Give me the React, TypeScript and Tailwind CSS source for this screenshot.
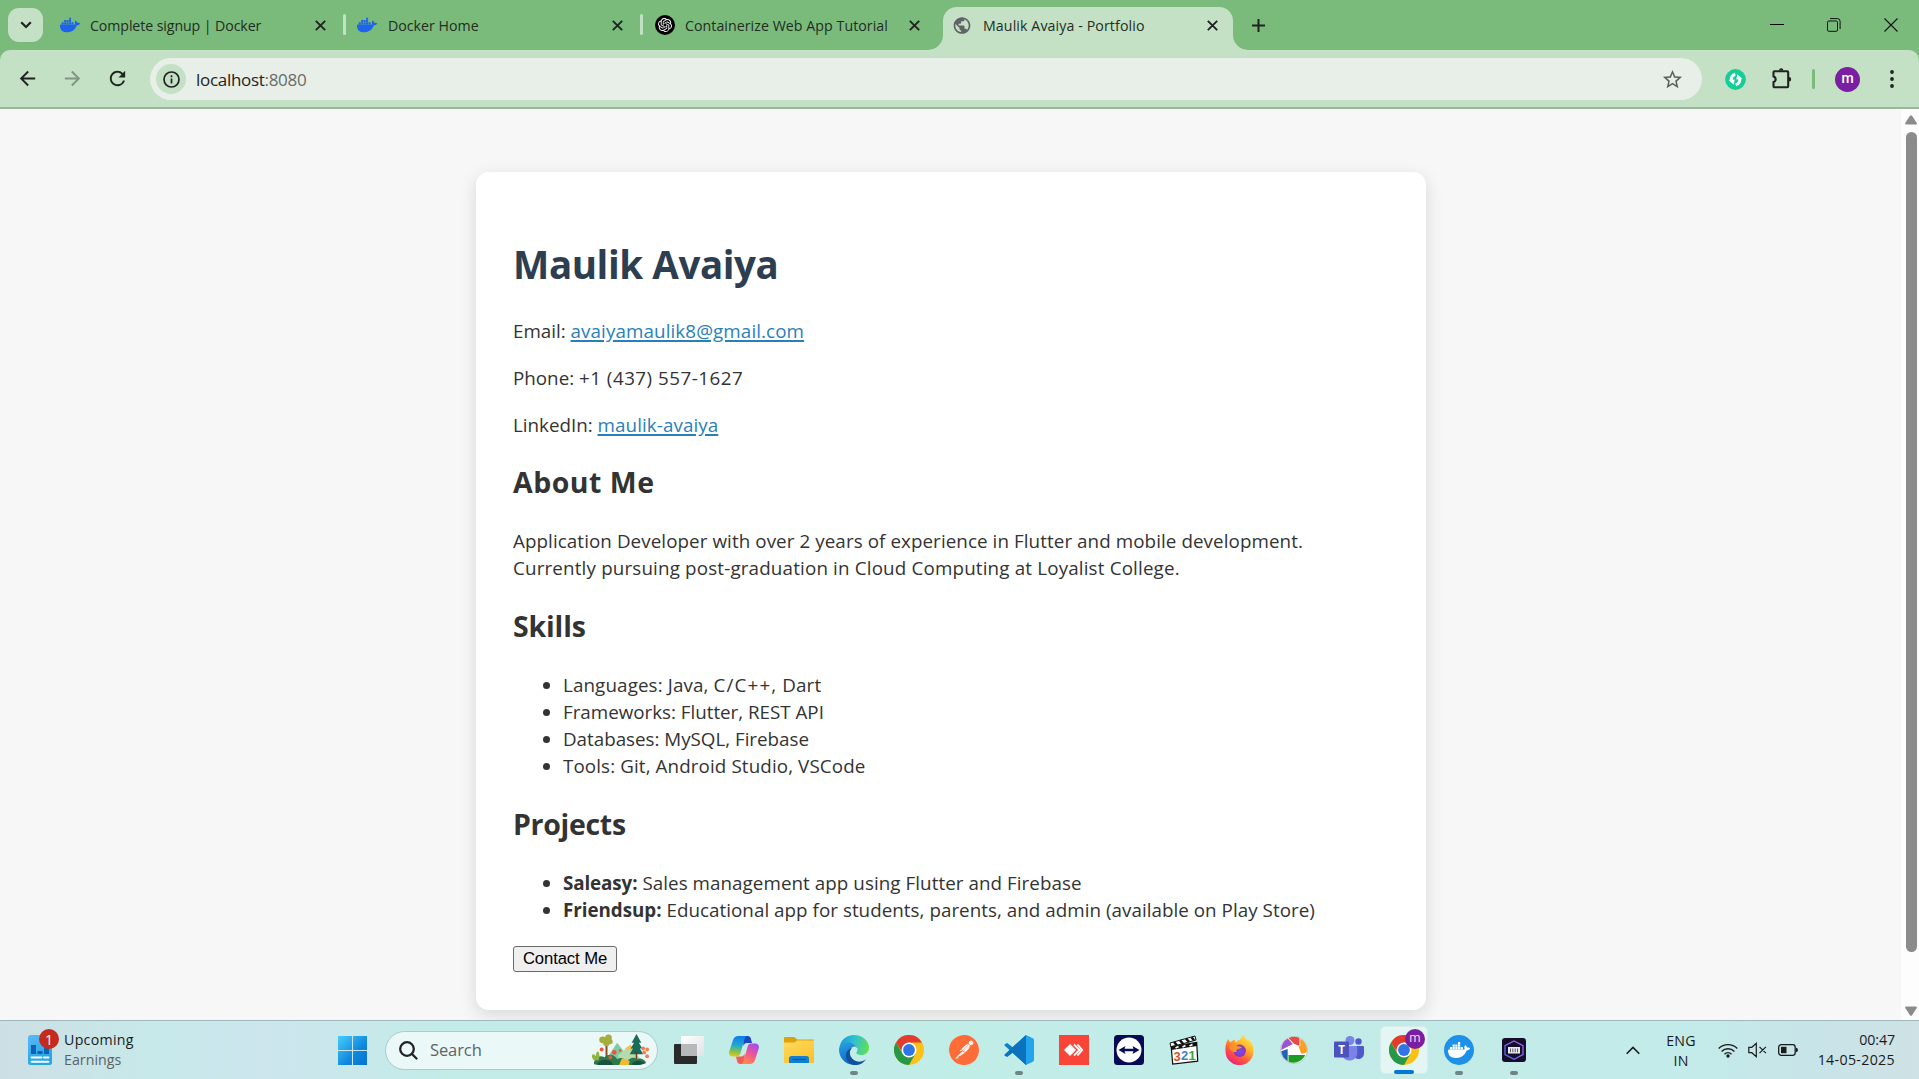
import React from "react";
import { SiDocker, SiOpenai, SiPostman } from "react-icons/si";
import { MdPublic, MdStarBorder, MdRefresh, MdArrowBack, MdArrowForward } from "react-icons/md";

function Cross({ size = 11 }: { size?: number }) {
  return (
    <svg width={size} height={size} viewBox="0 0 11 11" stroke="#1f2420" strokeWidth="1.9">
      <path d="M.8.8l9.4 9.4M10.2.8.8 10.2" />
    </svg>
  );
}

function Tab({ icon, title, tracking, className }: { icon: React.ReactNode; title: string; tracking: string; className: string }) {
  return (
    <div className={`flex h-[50px] items-center ${className}`}>
      <span className="flex w-5 shrink-0 items-center justify-center">{icon}</span>
      <span className={`ml-2.5 flex-1 whitespace-nowrap pt-0.5 text-[14.2px] text-[#1f2d22] ${tracking}`}>{title}</span>
      <Cross />
    </div>
  );
}

function TabStrip() {
  return (
    <div className="flex h-[50px] bg-[#7abb7c]">
      <div className="ml-2 mt-2 flex h-[34px] w-[35px] shrink-0 items-center justify-center rounded-[11px] bg-[#c5e1c5]">
        <svg width="12" height="8" viewBox="0 0 12 8" fill="none" stroke="#1f2420" strokeWidth="2.2">
          <path d="M1.2 1.2 6 6l4.800-4.800" />
        </svg>
      </div>
      <Tab className="ml-[17px] w-[266px]" tracking="tracking-[-0.1px]" title="Complete signup | Docker" icon={<SiDocker size={20} color="#1d63ed" />} />
      <span className="ml-[17px] mt-3.5 h-[21px] w-[3px] rounded-full bg-[#c5e1c5]" />
      <Tab className="ml-[11px] w-[266px]" tracking="pl-px tracking-[0px]" title="Docker Home" icon={<SiDocker size={20} color="#1d63ed" />} />
      <span className="ml-[17px] mt-3.5 h-[21px] w-[3px] rounded-full bg-[#c5e1c5]" />
      <Tab
        className="ml-3 w-[265px]"
        tracking="tracking-[0.05px]"
        title="Containerize Web App Tutorial"
        icon={
          <span className="flex size-5 items-center justify-center rounded-full bg-black">
            <SiOpenai size={14} color="#fff" />
          </span>
        }
      />
      <div className="ml-2 flex items-end">
        <svg width="15" height="15" viewBox="0 0 15 15" fill="#c5e1c5"><path d="M15 0v15H0A15 15 0 0 0 15 0z" /></svg>
        <div className="flex h-[43px] w-[290px] items-start rounded-t-[14px] bg-[#c5e1c5] pl-[9px]">
          <Tab className="-mt-[7px] w-[266px]" tracking="pl-px tracking-[0.1px]" title="Maulik Avaiya - Portfolio" icon={<MdPublic size={21} color="#5f6368" />} />
        </div>
        <svg width="15" height="15" viewBox="0 0 15 15" fill="#c5e1c5"><path d="M0 0v15h15A15 15 0 0 1 0 0z" /></svg>
      </div>
      <svg className="ml-[4px] mt-[19px]" width="13" height="13" viewBox="0 0 13 13" stroke="#1f2420" strokeWidth="2"><path d="M6.500 0v13M0 6.500h13" /></svg>
      <div className="ml-auto mr-[21px] flex h-[49px] items-center gap-[43.500px]">
        <svg className="-mr-px" width="14" height="14" viewBox="0 0 14 14" stroke="#000" shapeRendering="crispEdges"><path d="M0 6.500h14" /></svg>
        <svg width="14" height="14" viewBox="0 0 14 14" fill="none" stroke="#111"><rect x=".5" y="3" width="10" height="10.300" rx="1.200" /><path d="M3 .6h7.500a2.600 2.600 0 0 1 2.600 2.600v7.800" /></svg>
        <svg width="14" height="14" viewBox="0 0 14 14" stroke="#111" strokeWidth="1.1"><path d="M.5.5l13 13M13.500.5l-13 13" /></svg>
      </div>
    </div>
  );
}

function Toolbar() {
  return (
    <div className="bg-[#7abb7c]">
      <div className="flex h-[59px] items-start rounded-t-[10px] border-b-2 border-[#9cb59d] bg-[#c5e1c5] pt-2">
        <div className="ml-4 flex h-[42px] items-center gap-[22px] pb-px text-[#1f2420]">
          <MdArrowBack size={23} />
          <MdArrowForward size={23} className="opacity-40" />
          <MdRefresh size={23} />
        </div>
        <div className="ml-[21px] flex h-[42px] w-[1552px] items-center rounded-full bg-[#e8efe8] pl-1.5 pr-[18px]">
          <span className="flex size-[30px] items-center justify-center rounded-full bg-[#c5e1c5]">
            <svg width="17" height="17" viewBox="0 0 17 17" fill="none" stroke="#1f2420" strokeWidth="1.700"><circle cx="8.500" cy="8.500" r="7.500" /><path d="M8.500 7.500v5M8.500 4.300v1.900" /></svg>
          </span>
          <span className="ml-2.5 flex-1 pt-px text-[17px] tracking-[-0.3px] text-[#1f2420]">
            localhost<span className="text-[#666d67]">:8080</span>
          </span>
          <MdStarBorder size={23} color="#5a615b" />
        </div>
        <div className="flex h-[42px] items-center">
          <svg className="ml-[23px]" width="21" height="21" viewBox="0 0 21 21">
            <circle cx="10.500" cy="10.500" r="10.400" fill="#13cf97" />
            <path d="M10.300 5.200A5.300 5.300 0 0 0 6.400 12" fill="none" stroke="#fff" strokeWidth="3" />
            <path d="M10.700 15.800A5.300 5.300 0 0 0 14.600 9" fill="none" stroke="#fff" strokeWidth="3" />
            <path d="m3.700 11.300 6-.8-1 5.300zM17.300 9.700l-6 .8 1-5.300z" fill="#fff" />
          </svg>
          <svg className="ml-[25px]" width="22" height="22" viewBox="0 0 22 22" fill="none" stroke="#1f2420" strokeWidth="2.100" strokeLinejoin="round">
            <path d="M3.500 3.300h12.700q1 0 1 1V18.200q0 1-1 1H3.500q-1 0-1-1v-4.100a2.900 2.900 0 0 0 0-5.600V4.300q0-1 1-1z" />
            <path d="M8 2.500a2.200 2.200 0 0 1 4.400 0zM18 9a2.200 2.200 0 0 1 0 4.400z" fill="#1f2420" stroke="none" />
          </svg>
          <span className="ml-[19px] h-5 w-[3px] rounded-full bg-[#7abb7c]" />
          <span className="ml-5 flex size-[25px] items-center justify-center rounded-full bg-[#7b1fa2] pb-0.5 font-['Roboto'] text-[14px] font-medium text-white">m</span>
          <svg className="ml-[30px]" width="4" height="20" viewBox="0 0 4 20" fill="#1f2420"><circle cx="2" cy="3" r="1.900" /><circle cx="2" cy="10" r="1.900" /><circle cx="2" cy="17" r="1.900" /></svg>
        </div>
      </div>
    </div>
  );
}

const skills: [React.ReactNode, string][] = [
  [<>Languages: Java, <span className="tracking-[1.15px]">C/C++,</span> Dart</>, "tracking-[0.12px]"],
  ["Frameworks: Flutter, REST API", "tracking-[-0.01px]"],
  ["Databases: MySQL, Firebase", "tracking-[-0.01px]"],
  ["Tools: Git, Android Studio, VSCode", "tracking-[0.11px]"],
];

function Portfolio() {
  return (
    <div className="flex min-h-0 flex-1 bg-[#f7f7f7]">
      <div className="min-w-0 flex-1 overflow-hidden pt-[63px]">
        <main className="mx-auto h-[838px] w-[950px] rounded-[12.500px] bg-white px-[37.500px] pt-[64px] text-[18.800px] leading-[27px] text-[#333] shadow-[0_5px_18px_rgba(0,0,0,0.13)]">
          <h1 className="h-[53px] text-[38.500px] font-bold leading-[56px] tracking-[-0.42px] text-[#2c3e50]">Maulik Avaiya</h1>
          <div className="mt-[29px] flex flex-col gap-5">
            <p>Email: <a className="tracking-[0.1px] text-[#2980b9] underline decoration-2 underline-offset-2">avaiyamaulik8@gmail.com</a></p>
            <p>Phone: <span className="tracking-[0.5px]">+1 (437) 557-1627</span></p>
            <p>LinkedIn: <a className="tracking-[0.09px] text-[#2980b9] underline decoration-2 underline-offset-2">maulik-avaiya</a></p>
          </div>
          <h2 className="mt-[23px] text-[28.500px] font-bold leading-10 tracking-[0.5px]">About Me</h2>
          <p className="mt-[26px] whitespace-nowrap">
            <span className="block tracking-[0.083px]">Application Developer with over 2 years of experience in Flutter and mobile development.</span>
            <span className="block tracking-[0.165px]">Currently pursuing post-graduation in Cloud Computing at Loyalist College.</span>
          </p>
          <h2 className="mt-6 text-[28.500px] font-bold leading-10 tracking-[-0.15px]">Skills</h2>
          <ul className="mt-[26px] list-disc pl-[50px]">
            {skills.map(([s, t], i) => <li key={i}><span className={t}>{s}</span></li>)}
          </ul>
          <h2 className="mt-6 text-[28.500px] font-bold leading-10 tracking-[-0.3px]">Projects</h2>
          <ul className="mt-[26px] list-disc whitespace-nowrap pl-[50px]">
            <li className="tracking-[0.06px]"><b className="tracking-[-0.1px]">Saleasy:</b> Sales management app using Flutter and Firebase</li>
            <li className="tracking-[0.04px]"><b className="tracking-[-0.03px]">Friendsup:</b> Educational app for students, parents, and admin (available on Play Store)</li>
          </ul>
          <button className="mt-[22px] block h-[26px] w-[104px] rounded-[3px] border border-[#6b6b6b] bg-[#efefef] font-['Liberation_Sans'] text-[16.670px] leading-[22px] tracking-[-0.1px] text-black">Contact Me</button>
        </main>
      </div>
      <div className="flex w-[18px] shrink-0 flex-col items-center bg-[#fdfdfd] pb-1 pt-1.5">
        <svg className="ml-0.5" width="12" height="10" viewBox="0 0 12 10" fill="#8b8b8b"><path d="M5 .8q1-1.200 2 0l4.600 7q.8 1.700-.8 1.700H1.200Q-.4 9.500.4 7.800z" /></svg>
        <div className="ml-0.5 mt-[7px] h-[820px] w-[11px] rounded-full bg-[#8b8b8b]" />
        <svg className="ml-0.5 mt-auto" width="12" height="10" viewBox="0 0 12 10" fill="#8b8b8b"><path d="M5 9.200q1 1.200 2 0l4.600-7Q12.400.5 10.800.5H1.200Q-.4.500.4 2.200z" /></svg>
      </div>
    </div>
  );
}

function Chrome() {
  return (
    <svg width="30" height="30" viewBox="0 0 30 30">
      <circle cx="15" cy="15" r="15" fill="#fbc116" />
      <path d="M2 7.500A15 15 0 0 1 28 7.500H15L9 18.500z" fill="#e33b2e" />
      <path d="M2 7.500A15 15 0 0 0 15 30l6.500-11.250L8.500 18.750z" fill="#279847" />
      <circle cx="15" cy="15" r="7.500" fill="#fff" />
      <circle cx="15" cy="15" r="5.900" fill="#2f75e8" />
    </svg>
  );
}

function TaskView() {
  return (
    <svg width="30" height="28" viewBox="0 0 30 28">
      <defs><linearGradient id="tv" x2="1" y2="1"><stop stopColor="#fff" /><stop offset="1" stopColor="#dfe3e4" /></linearGradient></defs>
      <rect y="8" width="23" height="20" rx="1" fill="#2a2a2a" />
      <rect x="7" width="23" height="20" rx="1" fill="url(#tv)" />
      <path d="M7 8h16v12H7z" fill="#b5b9ba" />
    </svg>
  );
}

function Copilot() {
  return (
    <svg width="30" height="28" viewBox="0 0 30 28">
      <defs>
        <linearGradient id="cpa" x1=".4" y1="0" x2=".3" y2="1"><stop stopColor="#0c7ee8" /><stop offset=".45" stopColor="#22a8d4" /><stop offset=".75" stopColor="#7dc34a" /><stop offset="1" stopColor="#f2c21b" /></linearGradient>
        <linearGradient id="cpb" x1=".8" y1="0" x2=".3" y2="1"><stop stopColor="#a24cf0" /><stop offset=".5" stopColor="#ee5599" /><stop offset="1" stopColor="#ff8a45" /></linearGradient>
      </defs>
      <path d="M14 0h4.500c2 0 2.900 1 3.400 2.800L23 7h-5c-2 0-3 1-3.600 3z" fill="#1c45c8" />
      <path d="M16 28h-4.500c-2 0-2.900-1-3.400-2.800L7 20.500h5c2 0 3-1 3.600-3z" fill="#f45b57" />
      <path d="M9.500 0H18c-1.300.3-2 1.300-2.500 3l-4 14c-.7 2.400-1.700 3.500-4 3.500H4C.5 20.500-.5 18 .4 15L4 4C5 1.200 6.600 0 9.500 0z" fill="url(#cpa)" />
      <path d="M20.500 28H12c1.300-.3 2-1.300 2.500-3l4-14c.7-2.400 1.700-3.500 4-3.500H26c3.500 0 4.500 2.500 3.600 5.500L26 24c-1 2.800-2.600 4-5.500 4z" fill="url(#cpb)" />
    </svg>
  );
}

function Folder() {
  return (
    <svg width="30" height="26" viewBox="0 0 30 26">
      <defs><linearGradient id="fo" x2=".6" y2="1"><stop stopColor="#ffdb62" /><stop offset="1" stopColor="#fcc22c" /></linearGradient></defs>
      <path d="M1 0h9.500L13 2.500h16q1 0 1 1V8H0V1q0-1 1-1z" fill="#e0a009" />
      <path d="M0 5.500h10.500L13 3.500h17V25q0 1-1 1H1q-1 0-1-1z" fill="url(#fo)" />
      <path d="M5 26v-4.500q0-2.500 2.500-2.500h15q2.500 0 2.500 2.500V26z" fill="#1180d3" />
      <path d="M8.500 22.500h13" stroke="#0a559c" strokeWidth="1.200" />
    </svg>
  );
}

function Edge() {
  return (
    <svg width="30" height="30" viewBox="0 0 30 30">
      <defs>
        <linearGradient id="ea" x1="0" y1=".3" x2="1" y2=".5"><stop stopColor="#1f97db" /><stop offset=".5" stopColor="#2fc3cf" /><stop offset="1" stopColor="#62de55" /></linearGradient>
        <linearGradient id="eb" x1="0" y1="0" x2=".3" y2="1"><stop stopColor="#2aa0e4" /><stop offset="1" stopColor="#0f6cc4" /></linearGradient>
      </defs>
      <path d="M.3 13C1.500 5 7.500 0 15 0c8.500 0 15 6 15 12.500 0 5-3.800 7.500-7.700 7.500-3.300 0-5-1.200-5-2.200 0-.8 1.200-1.300 1.200-3.300 0-3.500-3.200-6.200-7.500-6.200C6 8.300 2 10 .3 13z" fill="url(#ea)" />
      <path d="M0 15c0-4.500 4-7.500 9-7.500 4.600 0 8.500 2.500 9.300 5.500-1-1.300-2.300-1.800-3.500-1.500-3 1-4.500 4-4.300 7 .2 4.500 3.500 9.500 8 11A15 15 0 0 1 0 15z" fill="url(#eb)" />
      <path d="M13 13c-2.300 2-2.700 5-1.400 8.300 2 4.500 7 6.200 11.400 5 2-.5 3.300-1.500 4.500-2.800-3.500 6-9.500 7.500-14 6C8 27.500 6.500 23 7 19.500c.5-3.300 3-6 6-6.500z" fill="#114f9f" />
    </svg>
  );
}

function VSCode() {
  return (
    <svg width="30" height="30" viewBox="0 0 30 30">
      <path d="M22 0 8.700 12.200 3.200 8 .8 9.200Q0 10 .8 10.800L22 30V22z" fill="#0b82cf" />
      <path d="M22 30 8.700 17.800 3.200 22l-2.400-1.200Q0 20 .8 19.200L22 0v8z" fill="#0b72bd" />
      <path d="m22 0 6.800 3.200Q30 4 30 5v20q0 1-1.200 1.800L22 30z" fill="#25a4ee" />
    </svg>
  );
}

function AnyDesk() {
  return (
    <svg width="30" height="30" viewBox="0 0 30 30">
      <path d="M0 0h30v30H0z" fill="#fb4438" />
      <path d="m5 15 6-6 6 6-6 6z" fill="#fff" />
      <path d="M15 9.500 20.500 15 15 20.500M18.500 9.500 23.200 15l-4.700 5.500" fill="none" stroke="#fff" strokeWidth="1.900" />
    </svg>
  );
}

function TeamViewer() {
  return (
    <svg width="30" height="30" viewBox="0 0 30 30">
      <rect width="30" height="30" rx="3.500" fill="#050a52" />
      <circle cx="15" cy="15" r="12.500" fill="#fff" />
      <path d="m4.500 15 7-4-1 2.800h9l-1-2.800 7 4-7 4 1-2.800h-9l1 2.800z" fill="#050a52" />
    </svg>
  );
}

function MediaPlayer() {
  return (
    <svg width="30" height="30" viewBox="0 0 30 30">
      <path d="M1 8 26 1l1 4L2 12z" fill="#fff" stroke="#111" />
      <path d="m5 7 3 3.400M11 5.200l3 3.500M17 3.600l3 3.300M22.500 2.200l2.500 3" stroke="#111" strokeWidth="2.500" />
      <path d="m2.200 11.500 25.500-4 1 18.700-25 2.800z" fill="#fff" stroke="#111" strokeWidth="1.200" />
      <path d="m2 11.500 26-4v3.500L2.300 15z" fill="#111" />
      <path d="m6.500 13 3-1.500M13.500 12l3-1.500M20.500 11l3-1.500" stroke="#fff" strokeWidth="1.800" />
      <g fontFamily="Liberation Sans" fontSize="13" fontWeight="700">
        <text x="4.500" y="26" fill="#d8541f">3</text><text x="12" y="25.300" fill="#3f7fd3">2</text><text x="19.500" y="24.600" fill="#3da43a">1</text>
      </g>
    </svg>
  );
}

function Firefox() {
  return (
    <svg width="29" height="30" viewBox="0 0 29 30">
      <defs>
        <linearGradient id="ff" x1=".85" y1="0" x2=".2" y2="1"><stop stopColor="#fff04a" /><stop offset=".35" stopColor="#ffb42a" /><stop offset=".65" stopColor="#ff5a38" /><stop offset="1" stopColor="#e8178a" /></linearGradient>
        <radialGradient id="fg"><stop stopColor="#6f4ff2" /><stop offset="1" stopColor="#8f35b8" /></radialGradient>
      </defs>
      <path d="M3.500 4c.3 1.500 1 2.700 2 3.300C7 5.800 8.500 5 10.500 4.700 10 5.800 10 6.700 10.300 7.500L15.500 4c1-2 2-3.300 3.500-4 .2 2.500 2 4 3.800 5.500L23 4.300c4 3 5.800 7.200 5.500 12A14 14 0 0 1 .5 16C.2 11 1 7 3.500 4z" fill="url(#ff)" />
      <circle cx="14.700" cy="15.800" r="6.200" fill="url(#fg)" />
      <path d="M4 10.500c3-1.700 6-1.500 8.300.3 1 .8 2.500 1 4.700 1-.8 1.500-2.300 2-4 2.300-1.200.2-2 1.400-1.500 2.800-4 1-7-2-7.500-6.400z" fill="#ff9327" />
    </svg>
  );
}

function Picasa() {
  return (
    <svg width="28" height="28" viewBox="0 0 28 28">
      <circle cx="14" cy="14" r="13.600" fill="#fff" stroke="#b4bfc0" strokeWidth=".8" />
      <path d="M8.500 2.200A13 13 0 0 1 19.500 2L19.500 10 14 7.800z" fill="#e64c43" />
      <path d="M20.300 2.500A13 13 0 0 1 26.700 16.500L21.500 18l-3-7.500 1.800-.5z" fill="#f7a024" />
      <path d="M8.500 19H25.300A13 13 0 0 1 8.500 25.700z" fill="#1a9d22" />
      <path d="M1.200 15.200 7.700 13v12.200A13 13 0 0 1 1.200 15.200z" fill="#2161b6" />
      <path d="M7.800 2.600 12.800 8 1.200 14A13 13 0 0 1 7.800 2.600z" fill="#9b52cf" />
    </svg>
  );
}

function Teams() {
  return (
    <svg width="30" height="28" viewBox="0 0 30 28">
      <circle cx="24.500" cy="5.500" r="3.200" fill="#5059c9" />
      <path d="M19 10h10q1 0 1 1v6.500a5.500 5.500 0 0 1-9 4.200z" fill="#5059c9" />
      <circle cx="16" cy="4.500" r="4.500" fill="#7b83eb" />
      <path d="M8 10h14q1.200 0 1.200 1.200V18a7.800 7.800 0 0 1-15.400 0z" fill="#7b83eb" />
      <rect y="5.500" width="15" height="16" rx="1.300" fill="#4b53bc" />
      <text x="7.500" y="17.700" textAnchor="middle" fontFamily="Open Sans" fontSize="11.500" fontWeight="700" fill="#fff">T</text>
    </svg>
  );
}

function DockerDesktop() {
  return (
    <svg width="24" height="24" viewBox="0 0 24 24">
      <defs><linearGradient id="dd" x1="0" y1="1" x2="1" y2="0"><stop stopColor="#4772ec" /><stop offset="1" stopColor="#b060ee" /></linearGradient></defs>
      <rect width="24" height="24" rx="3" fill="#150d29" />
      <path d="m12 3 9 4.700v8.900L12 21.300l-9-4.700V7.700z" fill="none" stroke="url(#dd)" strokeWidth="1.300" />
      <rect x="6" y="9" width="12" height="6.500" fill="#e8eaf2" />
      <path d="M8.500 10.500v3.700M10.800 10.500v3.700M13.200 10.500v3.700M15.500 10.500v3.700" stroke="#4b4a66" strokeWidth=".9" />
    </svg>
  );
}

function SearchArt() {
  return (
    <svg width="58" height="32" viewBox="0 0 60 33">
      <path d="M15 27V9" stroke="#8a4b23" strokeWidth="2" />
      <g fill="#a5ad3c"><circle cx="11" cy="6" r="3.500" /><circle cx="17" cy="4" r="3.500" /><circle cx="15" cy="9" r="3.500" /><circle cx="19" cy="8" r="2.500" /></g>
      <path d="m14 27 12-18 14 18z" fill="#7fcba4" />
      <path d="m27 22 13-11 10 15-23 4z" fill="#b4dbaa" />
      <path d="m34 15 6-4 4 7z" fill="#f3c14d" />
      <path d="m46 0-5 9h2.500l-3.500 6h2.500L39 21h14l-3.500-6H52l-3.500-6H51z" fill="#1b6b5a" />
      <path d="M46 18v10" stroke="#6a3a1c" strokeWidth="1.500" />
      <path d="M2 31c0-7 6-10 11-7 4-4 10-3 13 2 4-3 9 0 9 3 4-4 8-6 11-3 5-2 9 1 10 4-3 2-8 2-12 2H10c-4 0-7 0-8-1z" fill="#2c7a4b" />
      <path d="M2 27c-3-3-2-6-1-6 2 0 2 1 3 2 0-3 1-5 2-5 2 1 2 5 1 9z" fill="#93b43c" />
      <path d="m28 32 3-7 8 3-1 4z" fill="#f2ba32" />
      <path d="M5 31c4-5 11-6 15-2l2 3H7z" fill="#195340" />
      <path d="M41 31c4-5 10-4 14-1-3 2-8 2-12 2z" fill="#17503e" />
      <g fill="#e8593c"><circle cx="10" cy="16" r="2" /><circle cx="23" cy="19" r="2.500" /><circle cx="19" cy="24" r="2" /><circle cx="29" cy="17" r="1.300" /></g>
      <g fill="#f0805d"><circle cx="53" cy="15" r="2" /><circle cx="57" cy="16" r="2" /><circle cx="54" cy="19" r="2" /><circle cx="57" cy="23" r="2" /></g>
      <circle cx="55" cy="17" r="1.200" fill="#f9d45c" />
    </svg>
  );
}

const apps: { icon: React.ReactNode; running?: boolean }[] = [
  { icon: <TaskView /> },
  { icon: <Copilot /> },
  { icon: <Folder /> },
  { icon: <Edge />, running: true },
  { icon: <Chrome /> },
  { icon: <span className="flex size-[30px] items-center justify-center rounded-full bg-white"><SiPostman size={30} color="#ff6c37" /></span> },
  { icon: <VSCode />, running: true },
  { icon: <AnyDesk /> },
  { icon: <TeamViewer /> },
  { icon: <MediaPlayer /> },
  { icon: <Firefox /> },
  { icon: <Picasa /> },
  { icon: <Teams /> },
];

function AppCell({ icon, running }: { icon: React.ReactNode; running?: boolean }) {
  return (
    <div className="relative flex h-[59px] w-[55px] items-center justify-center">
      {icon}
      {running && <span className="absolute bottom-[5px] h-1 w-2 rounded-full bg-[#6f8583]" />}
    </div>
  );
}

function Taskbar() {
  return (
    <div className="flex h-[59px] shrink-0 items-center border-t border-[#9fb8b8] bg-[linear-gradient(90deg,#cddfe5_0%,#c6e9ea_8%,#cde6ee_14%,#c3ebe8_23%,#c1ede7_50%,#c3ebe9_82%,#c2ecea_87%,#c8e4e8_95%,#cfe2e5_100%)]">
      <div className="relative ml-7 h-[30px] w-6">
        <svg width="24" height="30" viewBox="0 0 24 30">
          <defs><linearGradient id="wi" x2=".3" y2="1"><stop stopColor="#5cb8f5" /><stop offset="1" stopColor="#23a5e6" /></linearGradient></defs>
          <rect width="24" height="30" rx="2.500" fill="url(#wi)" />
          <path d="M3 10h5v9H3zM9.500 16h5v3h-5zM16 12h5v7h-5z" fill="#0e63b5" />
          <path d="M3.500 22.500h10M16 22.500h4.500M3.500 26.700h17" stroke="#fff" strokeWidth="2" strokeLinecap="round" />
        </svg>
        <span className="absolute -top-1.5 left-[11px] flex size-5 items-center justify-center rounded-full bg-[#c42b1c] text-[14px] text-white">1</span>
      </div>
      <div className="ml-3 w-[274px] text-[14.200px] leading-5 text-[#1b1b1b]">
        <div className="tracking-[0.3px]">Upcoming</div>
        <div className="tracking-[0.05px] text-[#5a6265]">Earnings</div>
      </div>
      <svg width="29" height="29" viewBox="0 0 29 29">
        <defs><linearGradient id="wn" gradientUnits="userSpaceOnUse" x2="29" y2="29"><stop stopColor="#48cefa" /><stop offset=".6" stopColor="#0f87df" /><stop offset="1" stopColor="#0673d0" /></linearGradient></defs>
        <path d="M0 0h14v14H0zM15 0h14v14H15zM0 15h14v14H0zM15 15h14v14H15z" fill="url(#wn)" />
      </svg>
      <div className="ml-[18px] flex h-[39px] w-[273px] items-center rounded-full border border-[#a9cbca] bg-[#ebf8f8] pl-[13px] pr-[7px]">
        <svg width="19" height="19" viewBox="0 0 19 19" fill="none" stroke="#222" strokeWidth="2.300" strokeLinecap="round"><circle cx="8" cy="8" r="6.800" /><path d="m13 13 4.500 4.500" /></svg>
        <span className="ml-[12px] flex-1 pt-px text-[16.500px] tracking-[-0.1px] text-[#5c6465]">Search</span>
        <SearchArt />
      </div>
      <div className="ml-[3.500px] flex">
        {apps.map((a, i) => <AppCell key={i} {...a} />)}
        <div className="flex h-[59px] w-[55px] items-center justify-center">
          <div className="relative flex size-12 items-center justify-center rounded-[5px] border border-[#d5eeec] bg-[#e3f6f4]">
            <Chrome />
            <span className="absolute right-[2px] top-[2px] flex size-5 items-center justify-center rounded-full bg-[#7b1fa2] pb-0.5 font-['Roboto'] text-[13px] text-[#e9d0f2]">m</span>
            <span className="absolute -bottom-px h-1 w-5 rounded-full bg-[#0078d4]" />
          </div>
        </div>
        <AppCell running icon={<span className="flex size-[30px] items-center justify-center rounded-full bg-[#1d91ea]"><SiDocker size={22} color="#fff" /></span>} />
        <AppCell running icon={<DockerDesktop />} />
      </div>
      <div className="ml-auto mr-6 flex items-center text-[14.200px] leading-5 text-[#1b1b1b]">
        <svg width="14" height="9" viewBox="0 0 14 9" fill="none" stroke="#1b1b1b" strokeWidth="1.600"><path d="M.7 7.700 7 1.400l6.300 6.300" /></svg>
        <div className="ml-[21px] w-[40px] pt-px text-center tracking-[0.2px]">ENG<br />IN</div>
        <svg className="ml-[17px]" width="20" height="15" viewBox="0 0 20 15" fill="none" stroke="#1b1b1b" strokeWidth="1.400">
          <path d="M.7 5.500a13.200 13.200 0 0 1 18.600 0M3.600 8.400a9 9 0 0 1 12.800 0M6.500 11.200a5 5 0 0 1 7 0" /><circle cx="10" cy="13" r="1.700" fill="#1b1b1b" stroke="none" />
        </svg>
        <svg className="ml-2.5" width="20" height="16" viewBox="0 0 20 16" fill="none" stroke="#1b1b1b" strokeWidth="1.200">
          <path d="M.8 5.300h3L8.300 1.400v13.200L3.800 10.700h-3zM11.500 4.800l6.400 6.400M17.900 4.800l-6.400 6.400" />
        </svg>
        <svg className="ml-2.5" width="21" height="12" viewBox="0 0 21 12">
          <rect x=".7" y=".7" width="16.500" height="10.600" rx="2.500" fill="none" stroke="#1b1b1b" strokeWidth="1.300" /><path d="M3 2.800h5.500v6.400H3z" fill="#1b1b1b" /><path d="M18 3.800q2 .3 2 2.200t-2 2.200z" fill="#1b1b1b" />
        </svg>
        <div className="ml-[15px] w-[81px] whitespace-nowrap text-right tracking-[-0.1px]">00:47<br /><span className="tracking-[0.33px]">14-05-2025</span></div>
      </div>
    </div>
  );
}

export default function App() {
  return (
    <div className="flex h-[1079px] w-[1919px] flex-col overflow-hidden font-['Open_Sans','Noto_Sans',sans-serif]">
      <TabStrip />
      <Toolbar />
      <Portfolio />
      <Taskbar />
    </div>
  );
}
